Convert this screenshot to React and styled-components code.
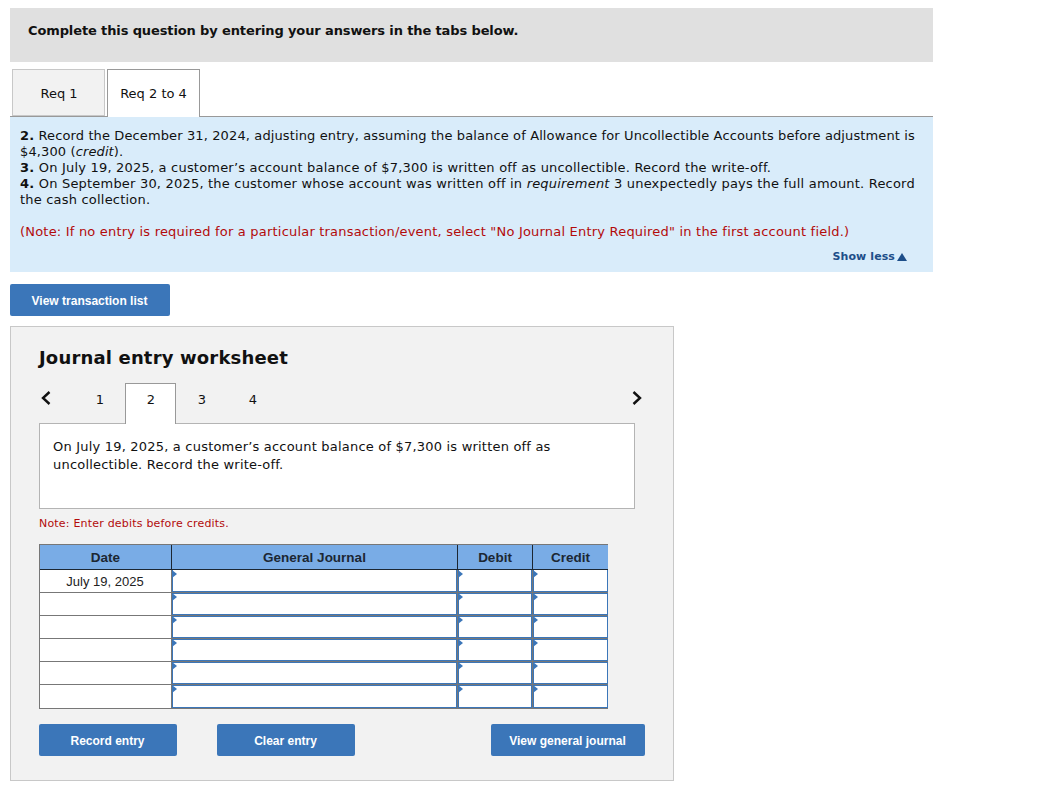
import React from 'react';
import styled, { createGlobalStyle } from 'styled-components';

const GlobalStyle = createGlobalStyle`
  html, body {
    margin: 0;
    padding: 0;
    background: #fff;
    color: #111;
    font-family: "DejaVu Sans", Verdana, sans-serif;
    font-size: 13px;
  }
`;

const Page = styled.div`
  width: 923px;
  padding: 8px 0 5px 10px;
`;

const Banner = styled.div`
  height: 54px;
  box-sizing: border-box;
  padding: 15px 18px;
  background: #e0e0e0;
  font-weight: bold;
  font-size: 13px;
  line-height: 16px;
  letter-spacing: -0.12px;
  color: #111;
`;

const Tabs = styled.div`
  display: flex;
  gap: 2px;
  margin: 7px 0 0;
  padding-left: 2px;
  border-bottom: 1px solid #999;
  height: 47px;
`;

const Tab = styled.div`
  box-sizing: border-box;
  width: 93px;
  height: ${p => (p.$active ? '48px' : '47px')};
  display: flex;
  align-items: center;
  justify-content: center;
  background: ${p => (p.$active ? '#fff' : '#f2f2f2')};
  border: 1px solid ${p => (p.$active ? '#999' : '#c8c8c8')};
  border-bottom: ${p => (p.$active ? 'none' : '1px solid #c8c8c8')};
  font-size: 13px;
  padding: ${p => (p.$active ? '0 0 1px' : '1px 0 0 1px')};
  position: relative;
  z-index: 1;
`;

const Panel = styled.div`
  background: #d9ecfa;
  height: 155px;
  box-sizing: border-box;
  padding: 11px 10px 0;
  line-height: 16px;
  font-size: 13px;
`;

const Line = styled.div`
  letter-spacing: ${p => p.$spacing || '0.2px'};
`;

const Note = styled.p`
  margin: 16px 0 0;
  color: #b30b0b;
  letter-spacing: 0.2px;
`;

const ShowLess = styled.div`
  display: flex;
  justify-content: flex-end;
  align-items: center;
  gap: 2px;
  margin: 0 16px 0 0;
  padding-top: 10px;
  color: #1d4e89;
  font-weight: bold;
  font-size: 11px;
  line-height: 14px;
  letter-spacing: 0.1px;
`;

const UpArrow = styled.span`
  width: 0;
  height: 0;
  border-left: 5px solid transparent;
  border-right: 5px solid transparent;
  border-bottom: 8px solid #1d4e89;
`;

const Button = styled.button`
  box-sizing: border-box;
  width: ${p => p.$width};
  height: 32px;
  padding: 1px 1px 0 0;
  border: none;
  border-radius: 2px;
  background: #3b76b9;
  color: #fff;
  font-family: "Liberation Sans", Arial, sans-serif;
  font-weight: bold;
  font-size: 12px;
`;

const TransactionRow = styled.div`
  display: flex;
  margin-top: 12px;
`;

const Worksheet = styled.div`
  box-sizing: border-box;
  width: 664px;
  height: 455px;
  margin-top: 10px;
  padding: 19px 28px 0;
  background: #f2f2f2;
  border: 1px solid #c8c8c8;
`;

const Title = styled.h2`
  margin: 0;
  font-size: 18px;
  line-height: 24px;
  letter-spacing: 0.17px;
  font-weight: bold;
  color: #111;
`;

const StepBar = styled.div`
  display: flex;
  align-items: stretch;
  height: 40px;
  margin-top: 13px;
  width: 606px;
  position: relative;
  z-index: 1;
`;

const Chevron = styled.svg`
  width: 12px;
  height: 18px;
  flex: none;
  margin-top: 6px;
`;

const ChevronLeft = styled(Chevron)`
  margin-left: 1px;
  margin-right: 22px;
`;

const ChevronRight = styled(Chevron)`
  margin-left: auto;
  margin-right: 2px;
`;

const Step = styled.div`
  box-sizing: border-box;
  width: 51px;
  height: 41px;
  display: flex;
  align-items: center;
  justify-content: center;
  padding: 0 0 10px 1px;
  font-size: 13px;
  background: ${p => (p.$active ? '#fff' : 'transparent')};
  border: 1px solid ${p => (p.$active ? '#999' : 'transparent')};
  border-bottom: none;
`;

const Prompt = styled.div`
  box-sizing: border-box;
  width: 596px;
  height: 86px;
  padding: 14px 13px;
  background: #fff;
  border: 1px solid #b4b4b4;
  line-height: 18px;
  font-size: 13px;
  letter-spacing: 0.2px;
`;

const DebitNote = styled.div`
  margin-top: 8px;
  color: #b30b0b;
  font-size: 11px;
  line-height: 14px;
  letter-spacing: 0.2px;
`;

const Grid = styled.div`
  box-sizing: border-box;
  display: grid;
  grid-template-columns: 132px 286px 75px 75px;
  width: 569px;
  margin-top: 13px;
  background: #777;
  border: 1px solid #777;
`;

const HeadCell = styled.div`
  box-sizing: border-box;
  height: 25px;
  display: flex;
  align-items: center;
  justify-content: center;
  background: #79ace6;
  border-bottom: 1px solid #1c2733;
  border-right: ${p => (p.$last ? 'none' : '1px solid #1c2733')};
  font-family: "Liberation Sans", Arial, sans-serif;
  font-weight: bold;
  font-size: 13.5px;
  color: #1c2733;
`;

const DateCell = styled.div`
  box-sizing: border-box;
  height: 23px;
  display: flex;
  align-items: center;
  justify-content: center;
  padding-right: 1px;
  background: #fff;
  border-bottom: ${p => (p.$last ? 'none' : '1px solid #777')};
  border-right: 1px solid #777;
  font-family: "Liberation Sans", Arial, sans-serif;
  font-size: 13px;
  color: #222;
`;

const EntryCell = styled.div`
  box-sizing: border-box;
  height: 23px;
  position: relative;
  border-right: ${p => (p.$lastCol ? 'none' : '1px solid #777')};
  border-bottom: ${p => (p.$lastRow ? 'none' : '1px solid #777')};

  &::before {
    content: '';
    position: absolute;
    top: 0;
    left: 0;
    border-top: 4px solid transparent;
    border-bottom: 4px solid transparent;
    border-left: 5px solid #3b76b9;
  }
`;

const EntryField = styled.input`
  display: block;
  box-sizing: border-box;
  width: 100%;
  height: 100%;
  margin: 0;
  padding: 0;
  background: #fff;
  border: 1px solid #3b76b9;
  border-top-width: ${p => (p.$firstRow ? '0' : '1px')};
  border-radius: 0;
  outline: none;
`;

const Actions = styled.div`
  display: flex;
  width: 606px;
  margin-top: 15px;
`;

const ClearButton = styled(Button)`
  margin-left: 40px;
`;

const JournalButton = styled(Button)`
  margin-left: auto;
`;

const steps = [1, 2, 3, 4];
const rows = ['July 19, 2025', '', '', '', '', ''];

export default function App() {
  return (
    <Page>
      <GlobalStyle />
      <Banner>Complete this question by entering your answers in the tabs below.</Banner>
      <Tabs>
        <Tab>Req 1</Tab>
        <Tab $active>Req 2 to 4</Tab>
      </Tabs>
      <Panel>
        <Line $spacing="0.12px">
          <b>2.</b> Record the December 31, 2024, adjusting entry, assuming the balance of Allowance for Uncollectible Accounts before adjustment is $4,300 (<i>credit</i>).
        </Line>
        <Line>
          <b>3.</b> On July 19, 2025, a customer’s account balance of $7,300 is written off as uncollectible. Record the write-off.
        </Line>
        <Line>
          <b>4.</b> On September 30, 2025, the customer whose account was written off in <i>requirement</i> 3 unexpectedly pays the full amount. Record the cash collection.
        </Line>
        <Note>(Note: If no entry is required for a particular transaction/event, select "No Journal Entry Required" in the first account field.)</Note>
        <ShowLess>Show less<UpArrow /></ShowLess>
      </Panel>
      <TransactionRow>
        <Button $width="160px">View transaction list</Button>
      </TransactionRow>
      <Worksheet>
        <Title>Journal entry worksheet</Title>
        <StepBar>
          <ChevronLeft viewBox="0 0 12 18">
            <path d="M9.5 3 L3 9 L9.5 15" fill="none" stroke="#111" strokeWidth="2.4" />
          </ChevronLeft>
          {steps.map(n => (
            <Step key={n} $active={n === 2}>{n}</Step>
          ))}
          <ChevronRight viewBox="0 0 12 18">
            <path d="M2.5 3 L9 9 L2.5 15" fill="none" stroke="#111" strokeWidth="2.4" />
          </ChevronRight>
        </StepBar>
        <Prompt>
          On July 19, 2025, a customer’s account balance of $7,300 is written off as<br />
          uncollectible. Record the write-off.
        </Prompt>
        <DebitNote>Note: Enter debits before credits.</DebitNote>
        <Grid>
          <HeadCell>Date</HeadCell>
          <HeadCell>General Journal</HeadCell>
          <HeadCell>Debit</HeadCell>
          <HeadCell $last>Credit</HeadCell>
          {rows.map((date, i) => {
            const lastRow = i === rows.length - 1;
            return (
              <React.Fragment key={i}>
                <DateCell $last={lastRow}>{date}</DateCell>
                <EntryCell $lastRow={lastRow}><EntryField $firstRow={i === 0} /></EntryCell>
                <EntryCell $lastRow={lastRow}><EntryField $firstRow={i === 0} /></EntryCell>
                <EntryCell $lastRow={lastRow} $lastCol><EntryField $firstRow={i === 0} /></EntryCell>
              </React.Fragment>
            );
          })}
        </Grid>
        <Actions>
          <Button $width="138px">Record entry</Button>
          <ClearButton $width="138px">Clear entry</ClearButton>
          <JournalButton $width="154px">View general journal</JournalButton>
        </Actions>
      </Worksheet>
    </Page>
  );
}
